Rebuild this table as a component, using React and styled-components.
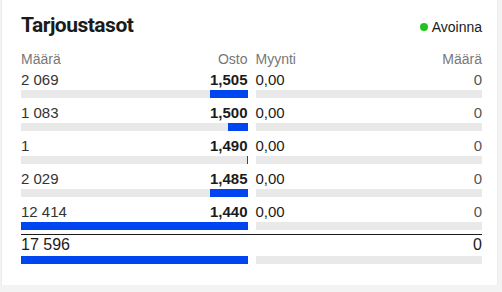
import React from "react";
import styled, { createGlobalStyle } from "styled-components";

const GlobalStyle = createGlobalStyle`
  body {
    margin: 0;
    background: #f3f3f3;
    font-family: "Liberation Sans", Arial, sans-serif;
  }
`;

const Card = styled.div`
  box-sizing: border-box;
  width: 497px;
  margin-left: 1px;
  background: #ffffff;
  border-left: 1px solid #ececec;
  border-right: 1px solid #ececec;
  padding: 13px 15px 21px 19px;
`;

const Header = styled.div`
  display: flex;
  justify-content: space-between;
  align-items: center;
  margin-bottom: 13px;
`;

const Title = styled.h2`
  margin: 0;
  font-family: Roboto, "Liberation Sans", sans-serif;
  font-size: 21px;
  line-height: 24px;
  font-weight: 700;
  letter-spacing: -0.5px;
  color: #1b1b1b;
`;

const Status = styled.div`
  display: flex;
  align-items: center;
  gap: 4px;
  font-size: 14px;
  color: #1b1b1b;
  margin-top: 4px;
`;

const Dot = styled.span`
  width: 8px;
  height: 8px;
  border-radius: 50%;
  background: #1fc41f;
`;

const Row = styled.div`
  display: grid;
  grid-template-columns: 1fr 1fr;
  column-gap: 8px;
  margin-bottom: ${(p) => p.$gap ?? 5}px;
  ${(p) =>
    p.$total &&
    `
    border-top: 1px solid #1b1b1b;
    margin-top: 4px;
  `}
`;

const Side = styled.div`
  display: flex;
  flex-direction: column;
`;

const Line = styled.div`
  display: flex;
  justify-content: space-between;
  font-size: ${(p) => (p.$total ? 16 : 15)}px;
  line-height: 19px;
  height: ${(p) => (p.$head ? 18 : 19)}px;
`;

const Label = styled.span`
  font-size: 14px;
  line-height: 18px;
  color: #777777;
`;

const Qty = styled.span`
  color: ${(p) => (p.$strong ? "#1b1b1b" : p.$muted ? "#555555" : "#333333")};
`;

const Price = styled.span`
  color: #1b1b1b;
  font-weight: ${(p) => (p.$bold ? 700 : 400)};
`;

const Track = styled.div`
  position: relative;
  height: 8px;
  margin-top: ${(p) => (p.$total ? 2 : 1)}px;
  background: #e9e9e9;
`;

const Fill = styled.div`
  position: absolute;
  top: 0;
  bottom: 0;
  right: 0;
  min-width: 1px;
  background: #0046f0;
`;

const rows = [
  { qty: "2 069", n: 2069, price: "1,505" },
  { qty: "1 083", n: 1083, price: "1,500" },
  { qty: "1", n: 1, price: "1,490" },
  { qty: "2 029", n: 2029, price: "1,485" },
  { qty: "12 414", n: 12414, price: "1,440" },
];

const max = 12414;

export default function App() {
  return (
    <>
      <GlobalStyle />
      <Card>
        <Header>
          <Title>Tarjoustasot</Title>
          <Status>
            <Dot />
            Avoinna
          </Status>
        </Header>
        <Row $gap={2}>
          <Line $head>
            <Label>Määrä</Label>
            <Label>Osto</Label>
          </Line>
          <Line $head>
            <Label>Myynti</Label>
            <Label>Määrä</Label>
          </Line>
        </Row>
        {rows.map((r, i) => (
          <Row key={i} $gap={i === rows.length - 1 ? 0 : 5}>
            <Side>
              <Line>
                <Qty>{r.qty}</Qty>
                <Price $bold>{r.price}</Price>
              </Line>
              <Track>
                <Fill style={{ width: `${(r.n / max) * 100}%` }} />
              </Track>
            </Side>
            <Side>
              <Line>
                <Price>0,00</Price>
                <Qty $muted>0</Qty>
              </Line>
              <Track />
            </Side>
          </Row>
        ))}
        <Row $total $gap={0}>
          <Side>
            <Line $total>
              <Qty $strong>17 596</Qty>
            </Line>
            <Track $total>
              <Fill style={{ width: "100%" }} />
            </Track>
          </Side>
          <Side>
            <Line $total>
              <span />
              <Qty $strong>0</Qty>
            </Line>
            <Track $total />
          </Side>
        </Row>
      </Card>
    </>
  );
}
